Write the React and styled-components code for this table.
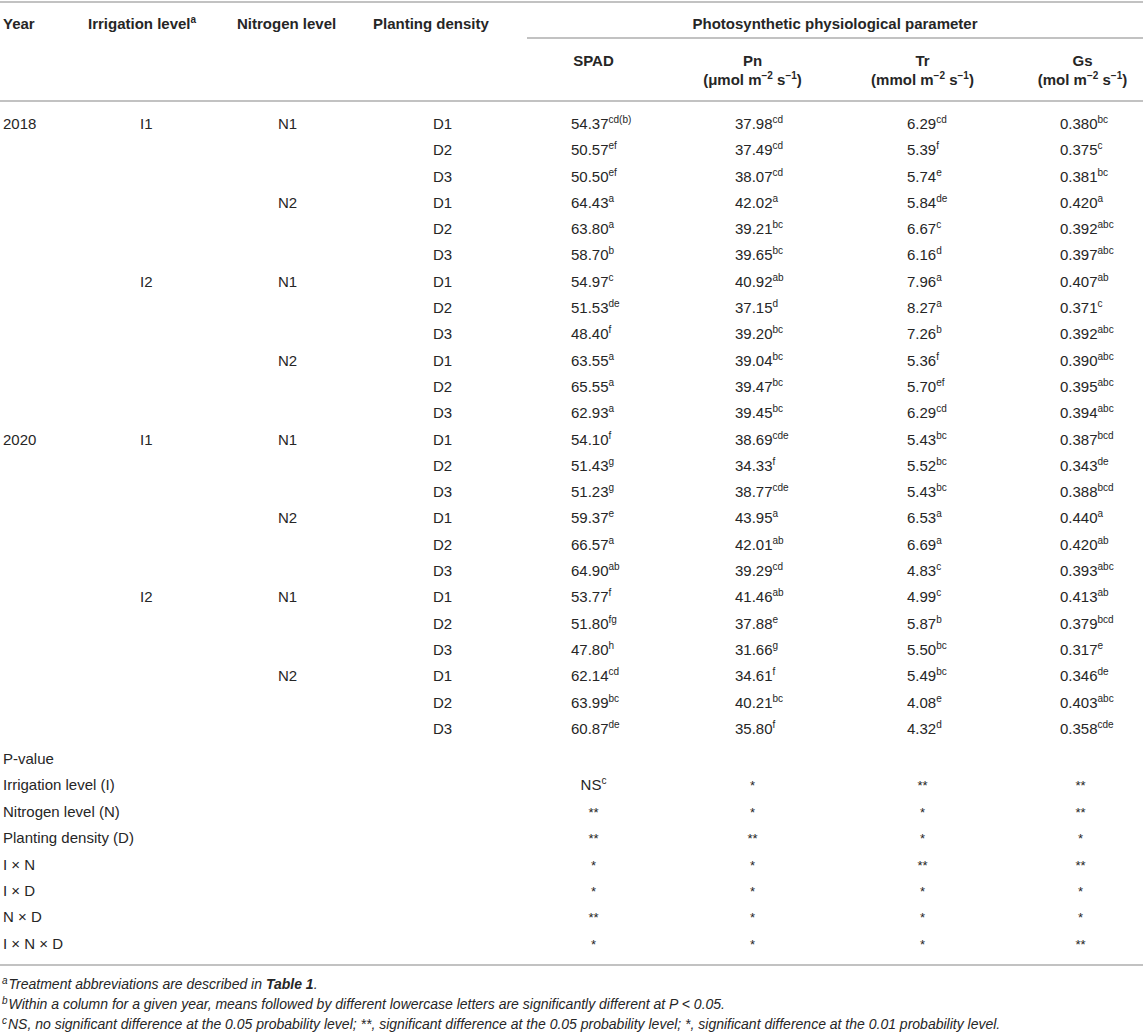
import styled, { createGlobalStyle } from 'styled-components';

const GlobalStyle = createGlobalStyle`
  body {
    margin: 0;
    background: #fff;
    font-family: 'Liberation Sans', Arial, sans-serif;
    color: #262626;
  }
`;

const Page = styled.div`
  width: 1143px;
  padding-top: 1px;
`;

const Table = styled.table`
  width: 100%;
  table-layout: fixed;
  border-spacing: 0;
  border-top: 2px solid #c2c2c2;
  border-bottom: 2px solid #c2c2c2;
  font-size: 15px;
`;

const Col = styled.col`
  width: ${(p) => p.$w}px;
`;

// 헤더 셀 (굵게)
const Th = styled.th`
  font-weight: 700;
  text-align: ${(p) => p.$align || 'left'};
  vertical-align: top;
  padding: 12px 0 0 ${(p) => p.$pad || 0}px;
  line-height: 17px;
  white-space: nowrap;
  border-bottom: ${(p) => (p.$line ? '2px solid #c2c2c2' : 'none')};
`;

const SpanTh = styled(Th)`
  padding-bottom: 5px;
`;

const UnitTh = styled(Th)`
  line-height: 19px;
  padding-bottom: 11px;
`;

const Td = styled.td`
  padding: ${(p) => p.$top || 0}px 0 0 ${(p) => p.$pad || 0}px;
  text-align: ${(p) => p.$align || 'left'};
  line-height: ${(p) => p.$lh || 26.3}px;
  white-space: nowrap;
  vertical-align: top;
`;

const LastTd = styled(Td)`
  padding-bottom: 7px;
`;

const Sup = styled.sup`
  font-size: 10px;
  line-height: 0;
  vertical-align: 6px;
`;

// 별표는 조금 작게, 줄 높이에 영향 안 주도록
const Star = styled.span`
  font-size: 13px;
  line-height: 1;
`;

const Notes = styled.div`
  padding: 8px 0 0 2px;
  font-size: 14px;
  font-style: italic;
  line-height: 20px;
`;

const Note = styled.p`
  margin: 0;
  white-space: nowrap;

  sup {
    font-size: 10px;
    line-height: 0;
    vertical-align: 5px;
    margin-right: 1px;
  }
`;

const widths = [80, 150, 135, 162, 133, 185, 155, 143];
const pads = [3, 60, 48, 68, 44, 75, 62, 60];

const rows = [
  ['2018', 'I1', 'N1', 'D1', ['54.37', 'cd(b)'], ['37.98', 'cd'], ['6.29', 'cd'], ['0.380', 'bc']],
  ['', '', '', 'D2', ['50.57', 'ef'], ['37.49', 'cd'], ['5.39', 'f'], ['0.375', 'c']],
  ['', '', '', 'D3', ['50.50', 'ef'], ['38.07', 'cd'], ['5.74', 'e'], ['0.381', 'bc']],
  ['', '', 'N2', 'D1', ['64.43', 'a'], ['42.02', 'a'], ['5.84', 'de'], ['0.420', 'a']],
  ['', '', '', 'D2', ['63.80', 'a'], ['39.21', 'bc'], ['6.67', 'c'], ['0.392', 'abc']],
  ['', '', '', 'D3', ['58.70', 'b'], ['39.65', 'bc'], ['6.16', 'd'], ['0.397', 'abc']],
  ['', 'I2', 'N1', 'D1', ['54.97', 'c'], ['40.92', 'ab'], ['7.96', 'a'], ['0.407', 'ab']],
  ['', '', '', 'D2', ['51.53', 'de'], ['37.15', 'd'], ['8.27', 'a'], ['0.371', 'c']],
  ['', '', '', 'D3', ['48.40', 'f'], ['39.20', 'bc'], ['7.26', 'b'], ['0.392', 'abc']],
  ['', '', 'N2', 'D1', ['63.55', 'a'], ['39.04', 'bc'], ['5.36', 'f'], ['0.390', 'abc']],
  ['', '', '', 'D2', ['65.55', 'a'], ['39.47', 'bc'], ['5.70', 'ef'], ['0.395', 'abc']],
  ['', '', '', 'D3', ['62.93', 'a'], ['39.45', 'bc'], ['6.29', 'cd'], ['0.394', 'abc']],
  ['2020', 'I1', 'N1', 'D1', ['54.10', 'f'], ['38.69', 'cde'], ['5.43', 'bc'], ['0.387', 'bcd']],
  ['', '', '', 'D2', ['51.43', 'g'], ['34.33', 'f'], ['5.52', 'bc'], ['0.343', 'de']],
  ['', '', '', 'D3', ['51.23', 'g'], ['38.77', 'cde'], ['5.43', 'bc'], ['0.388', 'bcd']],
  ['', '', 'N2', 'D1', ['59.37', 'e'], ['43.95', 'a'], ['6.53', 'a'], ['0.440', 'a']],
  ['', '', '', 'D2', ['66.57', 'a'], ['42.01', 'ab'], ['6.69', 'a'], ['0.420', 'ab']],
  ['', '', '', 'D3', ['64.90', 'ab'], ['39.29', 'cd'], ['4.83', 'c'], ['0.393', 'abc']],
  ['', 'I2', 'N1', 'D1', ['53.77', 'f'], ['41.46', 'ab'], ['4.99', 'c'], ['0.413', 'ab']],
  ['', '', '', 'D2', ['51.80', 'fg'], ['37.88', 'e'], ['5.87', 'b'], ['0.379', 'bcd']],
  ['', '', '', 'D3', ['47.80', 'h'], ['31.66', 'g'], ['5.50', 'bc'], ['0.317', 'e']],
  ['', '', 'N2', 'D1', ['62.14', 'cd'], ['34.61', 'f'], ['5.49', 'bc'], ['0.346', 'de']],
  ['', '', '', 'D2', ['63.99', 'bc'], ['40.21', 'bc'], ['4.08', 'e'], ['0.403', 'abc']],
  ['', '', '', 'D3', ['60.87', 'de'], ['35.80', 'f'], ['4.32', 'd'], ['0.358', 'cde']],
];

const pvalues = [
  ['Irrigation level (I)', ['NS', '*', '**', '**']],
  ['Nitrogen level (N)', ['**', '*', '*', '**']],
  ['Planting density (D)', ['**', '**', '*', '*']],
  ['I × N', ['*', '*', '**', '**']],
  ['I × D', ['*', '*', '*', '*']],
  ['N × D', ['**', '*', '*', '*']],
  ['I × N × D', ['*', '*', '*', '**']],
];

function Unit({ name }) {
  return (
    <>
      {name} m<Sup>−2</Sup> s<Sup>−1</Sup>)
    </>
  );
}

function StarCell({ value, col, last }) {
  const Cell = last ? LastTd : Td;
  const shift = col === 7 ? 18 : 0;
  return (
    <Cell $align="center" $pad={shift} $lh={26.4}>
      {value === 'NS' ? (
        <>
          NS<Sup>c</Sup>
        </>
      ) : (
        <Star>{value}</Star>
      )}
    </Cell>
  );
}

function App() {
  return (
    <Page>
      <GlobalStyle />
      <Table>
        <colgroup>
          {widths.map((w, i) => (
            <Col key={i} $w={w} />
          ))}
        </colgroup>
        <thead>
          <tr>
            <Th rowSpan={2} $pad={3} $line>Year</Th>
            <Th rowSpan={2} $pad={8} $line>
              Irrigation level<Sup>a</Sup>
            </Th>
            <Th rowSpan={2} $pad={7} $line>Nitrogen level</Th>
            <Th rowSpan={2} $pad={8} $line>Planting density</Th>
            <SpanTh colSpan={4} $align="center" $line>
              Photosynthetic physiological parameter
            </SpanTh>
          </tr>
          <tr>
            <UnitTh $align="center" $line>SPAD</UnitTh>
            <UnitTh $align="center" $line>
              Pn
              <br />
              <Unit name="(μmol" />
            </UnitTh>
            <UnitTh $align="center" $line>
              Tr
              <br />
              <Unit name="(mmol" />
            </UnitTh>
            <UnitTh $align="center" $pad={22} $line>
              Gs
              <br />
              <Unit name="(mol" />
            </UnitTh>
          </tr>
        </thead>
        <tbody>
          {rows.map((row, r) => (
            <tr key={r}>
              {row.map((cell, c) => (
                <Td key={c} $pad={pads[c]} $top={r === 0 ? 9 : 0}>
                  {Array.isArray(cell) ? (
                    <>
                      {cell[0]}
                      <Sup>{cell[1]}</Sup>
                    </>
                  ) : (
                    cell
                  )}
                </Td>
              ))}
            </tr>
          ))}
          <tr>
            <Td colSpan={8} $pad={3} $top={4}>
              P-value
            </Td>
          </tr>
          {pvalues.map(([label, stars], r) => {
            const last = r === pvalues.length - 1;
            const Cell = last ? LastTd : Td;
            return (
              <tr key={label}>
                <Cell colSpan={4} $pad={3} $lh={26.4}>
                  {label}
                </Cell>
                {stars.map((s, i) => (
                  <StarCell key={i} value={s} col={i + 4} last={last} />
                ))}
              </tr>
            );
          })}
        </tbody>
      </Table>
      <Notes>
        <Note>
          <sup>a</sup>Treatment abbreviations are described in <b>Table 1</b>.
        </Note>
        <Note>
          <sup>b</sup>Within a column for a given year, means followed by different lowercase letters are
          significantly different at P &lt; 0.05.
        </Note>
        <Note>
          <sup>c</sup>NS, no significant difference at the 0.05 probability level; **, significant difference
          at the 0.05 probability level; *, significant difference at the 0.01 probability level.
        </Note>
      </Notes>
    </Page>
  );
}

export default App;
